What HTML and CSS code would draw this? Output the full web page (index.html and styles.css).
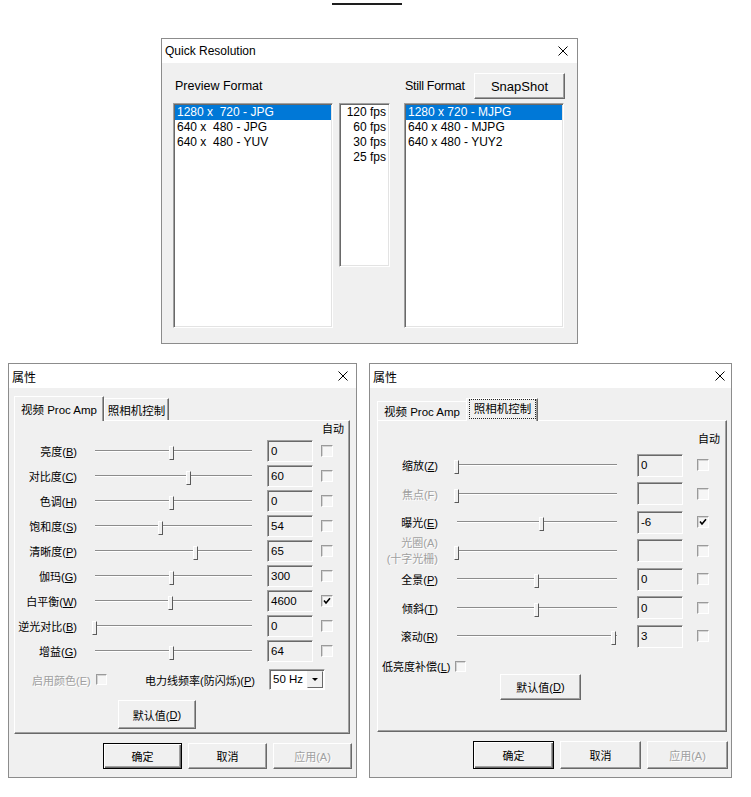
FILE: index.html
```html
<!DOCTYPE html>
<html lang="zh-CN">
<head>
<meta charset="utf-8">
<title>Quick Resolution</title>
<link rel="stylesheet" href="styles.css">
</head>
<body>
<div class="page">
  <div class="topline"></div>

  <div class="dlg qr">
    <div class="titlebar">
      <span>Quick Resolution</span>
      <svg class="close" viewBox="0 0 10 10"><path d="M0.5 0.5 L9.5 9.5 M9.5 0.5 L0.5 9.5" stroke="#000" stroke-width="1" fill="none"/></svg>
    </div>
    <div class="qr-body">
      <div class="qr-head">
        <span class="pf">Preview Format</span>
        <span class="sf">Still Format</span>
        <div class="btn snap">SnapShot</div>
      </div>
      <div class="qr-lists">
        <div class="list res">
          <div class="item sel">1280 x  720 - JPG</div>
          <div class="item">640 x  480 - JPG</div>
          <div class="item">640 x  480 - YUV</div>
        </div>
        <div class="list fps">
          <div class="item">120 fps</div>
          <div class="item">60 fps</div>
          <div class="item">30 fps</div>
          <div class="item">25 fps</div>
        </div>
        <div class="list res">
          <div class="item sel">1280 x 720 - MJPG</div>
          <div class="item">640 x 480 - MJPG</div>
          <div class="item">640 x 480 - YUY2</div>
        </div>
      </div>
    </div>
  </div>

  <div class="props-row">
    <!-- Left: Proc Amp -->
    <div class="dlg props l">
      <div class="titlebar">
        <span>属性</span>
        <svg class="close" viewBox="0 0 10 10"><path d="M0.5 0.5 L9.5 9.5 M9.5 0.5 L0.5 9.5" stroke="#000" stroke-width="1" fill="none"/></svg>
      </div>
      <div class="props-body">
        <div class="tabs">
          <div class="tab active t-video">视频 Proc Amp</div>
          <div class="tab t-cam">照相机控制</div>
        </div>
        <div class="panel">
          <div class="auto-head">自动</div>
          <div class="row"><span class="lbl">亮度(<u>B</u>)</span><div class="slider"><div class="track"></div><div class="thumb" style="left:78px"></div></div><div class="edit">0</div><span class="chk"></span></div>
          <div class="row"><span class="lbl">对比度(<u>C</u>)</span><div class="slider"><div class="track"></div><div class="thumb" style="left:95px"></div></div><div class="edit">60</div><span class="chk"></span></div>
          <div class="row"><span class="lbl">色调(<u>H</u>)</span><div class="slider"><div class="track"></div><div class="thumb" style="left:78px"></div></div><div class="edit">0</div><span class="chk"></span></div>
          <div class="row"><span class="lbl">饱和度(<u>S</u>)</span><div class="slider"><div class="track"></div><div class="thumb" style="left:67px"></div></div><div class="edit">54</div><span class="chk"></span></div>
          <div class="row"><span class="lbl">清晰度(<u>P</u>)</span><div class="slider"><div class="track"></div><div class="thumb" style="left:102px"></div></div><div class="edit">65</div><span class="chk"></span></div>
          <div class="row"><span class="lbl">伽玛(<u>G</u>)</span><div class="slider"><div class="track"></div><div class="thumb" style="left:78px"></div></div><div class="edit">300</div><span class="chk"></span></div>
          <div class="row"><span class="lbl">白平衡(<u>W</u>)</span><div class="slider"><div class="track"></div><div class="thumb" style="left:77px"></div></div><div class="edit">4600</div><span class="chk on"><svg viewBox="0 0 8 8"><path d="M1 3.5 L3 6 L7 1.2" stroke="#000" stroke-width="1.6" fill="none"/></svg></span></div>
          <div class="row"><span class="lbl">逆光对比(<u>B</u>)</span><div class="slider"><div class="track"></div><div class="thumb" style="left:1px"></div></div><div class="edit">0</div><span class="chk"></span></div>
          <div class="row"><span class="lbl">增益(<u>G</u>)</span><div class="slider"><div class="track"></div><div class="thumb" style="left:78px"></div></div><div class="edit">64</div><span class="chk"></span></div>
          <div class="opts">
            <span class="dis">启用颜色(E)</span><span class="chk small"></span>
            <span class="plabel">电力线频率(防闪烁)(<u>P</u>)</span>
            <div class="combo"><span>50 Hz</span><div class="drop"><i class="tri"></i></div></div>
          </div>
          <div class="defrow"><div class="btn def">默认值(<u>D</u>)</div></div>
        </div>
        <div class="btnrow">
          <div class="btn act default">确定</div>
          <div class="btn act">取消</div>
          <div class="btn act dis">应用(A)</div>
        </div>
      </div>
    </div>

    <!-- Right: Camera control -->
    <div class="dlg props r">
      <div class="titlebar">
        <span>属性</span>
        <svg class="close" viewBox="0 0 10 10"><path d="M0.5 0.5 L9.5 9.5 M9.5 0.5 L0.5 9.5" stroke="#000" stroke-width="1" fill="none"/></svg>
      </div>
      <div class="props-body">
        <div class="tabs">
          <div class="tab t-video">视频 Proc Amp</div>
          <div class="tab active t-cam"><span class="focus">照相机控制</span></div>
        </div>
        <div class="panel">
          <div class="auto-head">自动</div>
          <div class="row"><span class="lbl">缩放(<u>Z</u>)</span><div class="slider"><div class="track"></div><div class="thumb" style="left:1px"></div></div><div class="edit">0</div><span class="chk"></span></div>
          <div class="row"><span class="lbl dis">焦点(F)</span><div class="slider"><div class="track"></div><div class="thumb" style="left:1px"></div></div><div class="edit"></div><span class="chk"></span></div>
          <div class="row"><span class="lbl">曝光(<u>E</u>)</span><div class="slider"><div class="track"></div><div class="thumb" style="left:86px"></div></div><div class="edit">-6</div><span class="chk on"><svg viewBox="0 0 8 8"><path d="M1 3.5 L3 6 L7 1.2" stroke="#000" stroke-width="1.6" fill="none"/></svg></span></div>
          <div class="row"><span class="lbl dis two">光圈(A)<br>(十字光栅)</span><div class="slider"><div class="track"></div><div class="thumb" style="left:1px"></div></div><div class="edit"></div><span class="chk"></span></div>
          <div class="row"><span class="lbl">全景(<u>P</u>)</span><div class="slider"><div class="track"></div><div class="thumb" style="left:81px"></div></div><div class="edit">0</div><span class="chk"></span></div>
          <div class="row"><span class="lbl">倾斜(<u>T</u>)</span><div class="slider"><div class="track"></div><div class="thumb" style="left:81px"></div></div><div class="edit">0</div><span class="chk"></span></div>
          <div class="row"><span class="lbl">滚动(<u>R</u>)</span><div class="slider"><div class="track"></div><div class="thumb" style="left:158px"></div></div><div class="edit">3</div><span class="chk"></span></div>
          <div class="lowrow"><span>低亮度补偿(<u>L</u>)</span><span class="chk small"></span></div>
          <div class="defrow"><div class="btn def">默认值(<u>D</u>)</div></div>
        </div>
        <div class="btnrow">
          <div class="btn act default">确定</div>
          <div class="btn act">取消</div>
          <div class="btn act dis">应用(A)</div>
        </div>
      </div>
    </div>
  </div>
</div>
</body>
</html>
```

FILE: styles.css
```css
* { box-sizing: border-box; }

body {
  margin: 0;
  background: #fff;
  color: #000;
  font-family: "Liberation Sans", "Noto Sans CJK SC", sans-serif;
}

.page {
  width: 751px;
  height: 797px;
  overflow: hidden;
}

.topline {
  width: 70px;
  height: 2px;
  margin: 3px 0 0 332px;
  background: #1e1e1e;
}

/* generic dialog */
.dlg {
  border: 1px solid #8c8c8c;
  background: #f0f0f0;
  display: flex;
  flex-direction: column;
}

.titlebar {
  flex: none;
  height: 24px;
  background: #fff;
  display: flex;
  align-items: center;
  justify-content: space-between;
  padding: 0 8px 0 3px;
  font-size: 12px;
}

.close {
  width: 10px;
  height: 10px;
  display: block;
}

/* generic 3D button */
.btn {
  display: flex;
  align-items: center;
  justify-content: center;
  background: #f0f0f0;
  border: 1px solid;
  border-color: #fff #696969 #696969 #fff;
  box-shadow: inset -1px -1px 0 #a0a0a0;
  white-space: nowrap;
}

.btn.default {
  border-color: #000;
  box-shadow: inset 1px 1px 0 #fff, inset -1px -1px 0 #696969, inset -2px -2px 0 #a0a0a0;
}

.btn.dis, .dis {
  color: #a0a0a0;
  text-shadow: 1px 1px 0 #fff;
}

/* ---------- Quick Resolution ---------- */
.qr {
  width: 417px;
  height: 306px;
  margin: 33px 0 0 161px;
}

.qr .titlebar { padding-right: 9px; }

.qr-body {
  padding: 10px 13px 0 11px;
  font-size: 12.5px;
}

.qr-head {
  display: flex;
  align-items: center;
  height: 26px;
  white-space: nowrap;
}

.qr-head .pf {
  flex: none;
  width: 231px;
  padding-left: 2px;
}

.qr-head .sf {
  flex: none;
  width: 70px;
  padding-left: 1px;
  letter-spacing: -0.3px;
}

.btn.snap {
  flex: none;
  width: 91px;
  height: 26px;
  font-size: 13px;
}

.qr-lists {
  display: flex;
  align-items: flex-start;
  margin-top: 4px;
}

.list {
  background: #fff;
  border: 1px solid;
  border-color: #a0a0a0 #fff #fff #a0a0a0;
  box-shadow: inset 1px 1px 0 #696969, inset -1px -1px 0 #e3e3e3;
  padding: 1px 1px 0 1px;
  font-size: 12px;
}

.list.res {
  width: 160px;
  height: 225px;
}

.list.fps {
  width: 51px;
  height: 164px;
  margin: 0 14px 0 6px;
  text-align: right;
}

.item {
  height: 15px;
  line-height: 15px;
  white-space: pre;
  padding-left: 2px;
}

.list.fps .item { padding: 0 2px 0 0; }

.item.sel {
  background: #0078d7;
  color: #fff;
}

/* ---------- Property dialogs ---------- */
.props-row {
  display: flex;
  gap: 12px;
  margin-top: 19px;
  padding-left: 8px;
}

.props {
  height: 415px;
  font-size: 11px;
}

.props.l { width: 349px; }
.props.r { width: 363px; }
.props.r .titlebar { padding-right: 6px; }

.props-body {
  flex: 1;
  display: flex;
  flex-direction: column;
}

.props.l .props-body { padding: 8px 0 0 5px; }
.props.r .props-body { padding: 10px 0 0 7px; }

/* tabs */
.tabs {
  display: flex;
  align-items: flex-end;
  position: relative;
  z-index: 1;
  margin-bottom: -1px;
}

.props.l .tabs { height: 25px; }
.props.r .tabs { height: 23px; }

.tab {
  display: flex;
  align-items: center;
  justify-content: center;
  background: #f0f0f0;
  border-top: 1px solid #fff;
  border-left: 1px solid #fff;
  border-right: 1px solid #696969;
  box-shadow: inset -1px 0 0 #a0a0a0;
  margin-bottom: 1px;
  white-space: nowrap;
  font-size: 11.5px;
}

.tab.active { margin-bottom: 0; }

.props.l .t-video { width: 90px; height: 25px; }
.props.l .t-cam { width: 65px; height: 22px; }
.props.r .t-video { width: 89px; height: 19px; border-right: none; box-shadow: none; }
.props.r .t-cam { width: 72px; height: 23px; padding: 0 1px 2px 2px; align-items: flex-start; }

.focus {
  display: block;
  width: 100%;
  height: 20px;
  line-height: 18px;
  border: 1px dotted #222;
  text-align: center;
}

/* panel */
.panel {
  border: 1px solid;
  border-color: #fff #696969 #696969 #fff;
  box-shadow: inset -1px -1px 0 #a0a0a0;
}

.props.l .panel { width: 336px; height: 314px; }
.props.r .panel { width: 350px; height: 312px; }

.auto-head {
  text-align: right;
}

.props.l .auto-head {
  height: 17px;
  line-height: 17px;
  padding-right: 5px;
}

.props.r .auto-head {
  height: 30px;
  line-height: 16px;
  padding: 10px 6px 0 0;
}

.row {
  display: flex;
  align-items: center;
}

.props.l .row { height: 25px; }
.props.r .row { height: 28.5px; }

.lbl {
  flex: none;
  text-align: right;
  white-space: nowrap;
}

.props.l .lbl { width: 62px; }
.props.r .lbl { width: 60px; }

.lbl.two { line-height: 16px; }

.slider {
  flex: none;
  position: relative;
  height: 20px;
  display: flex;
  align-items: center;
  padding: 0 1px 0 4px;
}

.props.l .slider { width: 162px; margin-left: 14px; }
.props.r .slider { width: 165px; margin-left: 15px; }

.track {
  flex: 1;
  height: 2px;
  border-top: 1px solid #8c8c8c;
  border-bottom: 1px solid #fff;
}

.thumb {
  position: absolute;
  top: 5px;
  width: 5px;
  height: 14px;
  background: #f0f0f0;
  border: 1px solid;
  border-color: #fff #5a5a5a #5a5a5a #fff;
}

.edit {
  flex: none;
  width: 46px;
  background: #f0f0f0;
  border: 1px solid;
  border-color: #a0a0a0 #fff #fff #a0a0a0;
  box-shadow: inset 1px 1px 0 #696969;
  padding-left: 3px;
  font-size: 11.5px;
  display: flex;
  align-items: center;
}

.props.l .edit { height: 22px; margin-left: 14px; }
.props.r .edit { height: 23px; margin-left: 19px; }

.chk {
  flex: none;
  width: 12px;
  height: 12px;
  border: 1px solid;
  border-color: #9a9a9a #fff #fff #9a9a9a;
  box-shadow: inset 1px 1px 0 #d4d4d4;
  background: #f6f6f6;
  display: flex;
  align-items: center;
  justify-content: center;
}

.chk svg {
  width: 8px;
  height: 8px;
  display: block;
}

.props.l .row .chk { margin-left: 8px; }
.props.r .row .chk { margin-left: 14px; }

.chk.small {
  width: 11px;
  height: 11px;
}

/* left extra options */
.opts {
  display: flex;
  align-items: center;
  height: 21px;
  margin-top: 6px;
  padding: 0 24px 0 17px;
  white-space: nowrap;
}

.opts .chk { margin-left: 5px; }

.plabel { margin-left: auto; }

.combo {
  flex: none;
  width: 56px;
  height: 21px;
  margin-left: 14px;
  display: flex;
  background: #fff;
  border: 1px solid;
  border-color: #a0a0a0 #fff #fff #a0a0a0;
  box-shadow: inset 1px 1px 0 #696969;
  padding: 1px;
}

.combo span {
  flex: 1;
  padding-left: 2px;
  font-size: 11.5px;
  line-height: 17px;
}

.drop {
  width: 16px;
  background: #f0f0f0;
  border: 1px solid;
  border-color: #f0f0f0 #696969 #696969 #f0f0f0;
  display: flex;
  align-items: center;
  justify-content: center;
}

.tri {
  width: 0;
  height: 0;
  border-left: 3px solid transparent;
  border-right: 3px solid transparent;
  border-top: 3px solid #000;
}

.defrow { display: flex; }

.props.l .defrow { margin-top: 10px; padding-left: 103px; }
.props.l .btn.def { width: 78px; height: 29px; }

.props.r .defrow { padding-left: 122px; }
.props.r .btn.def { width: 81px; height: 26px; }

/* right extra option */
.lowrow {
  display: flex;
  align-items: center;
  height: 15px;
  margin-top: 8px;
  padding-left: 4px;
  white-space: nowrap;
}

.lowrow .chk { margin-left: 5px; }

/* bottom buttons */
.btnrow {
  display: flex;
  justify-content: flex-end;
  gap: 6px;
  margin-top: 9px;
}

.props.l .btnrow { padding-right: 4px; }
.props.r .btnrow { padding-right: 3px; }

.props.l .btn.act { width: 79px; height: 26px; }
.props.r .btn.act { width: 81px; height: 28px; }
```
